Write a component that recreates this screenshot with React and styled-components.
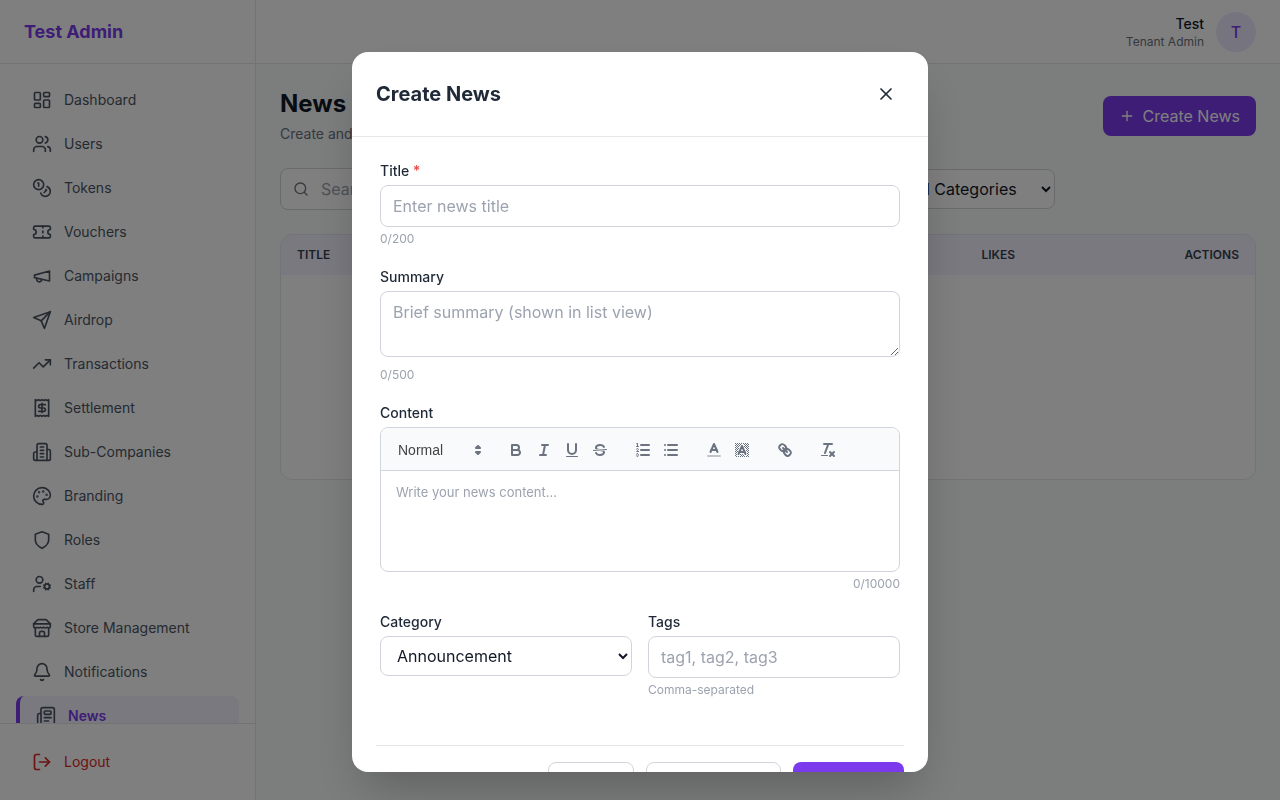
import React from 'react';
import styled, { createGlobalStyle } from 'styled-components';
import {
  LayoutDashboard, Users, Coins, Ticket, TrendingUp, Receipt,
  Palette, UserCog, Bell, Newspaper, LogOut, Plus, Search, X,
} from 'lucide-react';

const Global = createGlobalStyle`
  * { box-sizing: border-box; }
  html, body { margin: 0; height: 100%; overflow: hidden; }
  body { font-family: Inter, "Liberation Sans", sans-serif; background: #f9fafb; color: #111827; }
`;

const Shell = styled.div`
  display: flex;
  height: 100vh;
  overflow: hidden;
`;

const Sidebar = styled.aside`
  width: 256px;
  flex: none;
  display: flex;
  flex-direction: column;
  background: #fff;
  border-right: 1px solid #e5e7eb;
`;

const Brand = styled.div`
  height: 64px;
  flex: none;
  display: flex;
  align-items: center;
  padding: 0 24px;
  border-bottom: 1px solid #e5e7eb;
  font-size: 18px;
  font-weight: 700;
  color: #7c3aed;
`;

const Nav = styled.nav`
  flex: 1;
  min-height: 0;
  overflow: hidden;
  padding-top: 16px;
  display: flex;
  flex-direction: column;
  gap: 4px;
`;

const NavItem = styled.div`
  height: 40px;
  flex: none;
  margin: 0 16px;
  padding: 0 16px;
  display: flex;
  align-items: center;
  gap: 12px;
  font-size: 14px;
  line-height: 20px;
  font-weight: ${(p) => (p.$active ? 600 : 400)};
  color: ${(p) => (p.$active ? '#7c3aed' : '#4b5563')};
  background: ${(p) => (p.$active ? '#f5f3ff' : 'transparent')};
  border-left: ${(p) => (p.$active ? '4px solid #7c3aed' : 'none')};
  border-radius: 8px;
  svg { flex: none; color: #4b5563; }
`;

const SideFooter = styled.div`
  flex: none;
  padding: 16px 0;
  border-top: 1px solid #e5e7eb;
`;

const LogoutItem = styled(NavItem)`
  height: 44px;
  color: #dc2626;
  svg { color: #dc2626; }
`;

const LineIcon = styled.svg.attrs({ viewBox: '0 0 24 24' })`
  width: 20px;
  height: 20px;
  fill: none;
  stroke: currentColor;
  stroke-width: 2;
  stroke-linecap: round;
  stroke-linejoin: round;
`;

const Main = styled.div`
  flex: 1;
  min-width: 0;
  display: flex;
  flex-direction: column;
`;

const TopBar = styled.header`
  height: 64px;
  flex: none;
  display: flex;
  justify-content: flex-end;
  align-items: center;
  gap: 12px;
  padding: 0 24px;
  background: #fff;
  border-bottom: 1px solid #e5e7eb;
`;

const UserInfo = styled.div`
  text-align: right;
`;

const UserName = styled.div`
  font-size: 14px;
  line-height: 20px;
  font-weight: 500;
  color: #111827;
`;

const UserRole = styled.div`
  font-size: 12px;
  line-height: 16px;
  color: #6b7280;
`;

const Avatar = styled.div`
  width: 40px;
  height: 40px;
  border-radius: 50%;
  background: #ede9fe;
  color: #7c3aed;
  font-size: 16px;
  font-weight: 500;
  display: flex;
  align-items: center;
  justify-content: center;
`;

const Content = styled.main`
  padding: 24px;
`;

const PageHead = styled.div`
  display: flex;
  align-items: center;
  justify-content: space-between;
  margin-bottom: 24px;
`;

const PageTitle = styled.h1`
  margin: 0 0 4px;
  font-size: 24px;
  line-height: 32px;
  font-weight: 700;
  color: #111827;
`;

const PageSub = styled.p`
  margin: 0;
  font-size: 14px;
  line-height: 20px;
  color: #6b7280;
`;

const PrimaryButton = styled.button`
  height: 40px;
  padding: 0 16px;
  display: flex;
  align-items: center;
  gap: 8px;
  border: none;
  border-radius: 8px;
  background: #7c3aed;
  color: #fff;
  font: 400 16px Inter, sans-serif;
`;

const Filters = styled.div`
  display: flex;
  align-items: center;
  gap: 16px;
  margin-bottom: 24px;
`;

const SearchBox = styled.div`
  width: 598px;
  height: 42px;
  display: flex;
  align-items: center;
  gap: 12px;
  padding: 0 12px;
  background: #fff;
  border: 1px solid #d1d5db;
  border-radius: 8px;
  font-size: 16px;
  color: #9ca3af;
  svg { flex: none; color: #6b7280; }
`;

const FilterSelect = styled.select`
  width: 161px;
  height: 40px;
  padding: 0 12px;
  background: #fff;
  border: 1px solid #d1d5db;
  border-radius: 8px;
  font: 400 16px Inter, sans-serif;
  color: #111827;
`;

const TableCard = styled.div`
  height: 246px;
  background: #fff;
  border: 1px solid #e5e7eb;
  border-radius: 12px;
  overflow: hidden;
`;

const TableHead = styled.div`
  height: 40px;
  display: flex;
  align-items: center;
  padding: 0 16px 1px;
  background: #f5f3ff;
  font-size: 12px;
  line-height: 16px;
  font-weight: 600;
  text-transform: uppercase;
  color: #374151;
`;

const HeadCell = styled.div`
  flex: ${(p) => (p.$grow ? 1 : 'none')};
  width: ${(p) => p.$width || 'auto'};
  text-align: ${(p) => p.$align || 'left'};
`;

const Overlay = styled.div`
  position: fixed;
  inset: 0;
  padding-top: 52px;
  display: flex;
  align-items: flex-start;
  justify-content: center;
  background: rgba(0, 0, 0, 0.5);
  backdrop-filter: blur(0.5px);
`;

const Modal = styled.div`
  width: 576px;
  height: 720px;
  background: #fff;
  border-radius: 16px;
  overflow: hidden;
  box-shadow: 0 25px 50px -12px rgba(0, 0, 0, 0.25);
`;

const ModalHead = styled.div`
  height: 85px;
  padding: 0 24px;
  display: flex;
  align-items: center;
  justify-content: space-between;
  border-bottom: 1px solid #e5e7eb;
`;

const ModalTitle = styled.h2`
  margin: 0;
  font-size: 20px;
  line-height: 28px;
  font-weight: 700;
  color: #1f2937;
`;

const CloseButton = styled.button`
  width: 36px;
  height: 36px;
  display: flex;
  align-items: center;
  justify-content: center;
  padding: 0;
  border: none;
  background: none;
  color: #1f2937;
`;

const Form = styled.form`
  padding: 24px;
`;

const Fields = styled.div`
  padding: 0 4px;
  display: flex;
  flex-direction: column;
  gap: 20px;
`;

const Label = styled.label`
  display: block;
  margin-bottom: 4px;
  font-size: 14px;
  line-height: 20px;
  font-weight: 500;
  color: #1f2937;
`;

const Required = styled.span`
  color: #ef4444;
`;

const Input = styled.input`
  display: block;
  width: 100%;
  height: 42px;
  padding: 0 12px;
  background: #fff;
  border: 1px solid #d1d5db;
  border-radius: 8px;
  font: 400 16px Inter, sans-serif;
  color: #111827;
  &::placeholder { color: #9ca3af; opacity: 1; }
`;

const TextArea = styled.textarea`
  display: block;
  width: 100%;
  height: 66px;
  margin-bottom: 10px;
  padding: 10px 12px;
  background: #fff;
  border: 1px solid #d1d5db;
  border-radius: 8px;
  font: 400 16px/20px Inter, sans-serif;
  color: #111827;
  &::placeholder { color: #9ca3af; opacity: 1; }
`;

const Hint = styled.div`
  margin-top: 4px;
  font-size: 12px;
  line-height: 16px;
  color: #9ca3af;
  text-align: ${(p) => p.$align || 'left'};
`;

const Editor = styled.div`
  border: 1px solid #d1d5db;
  border-radius: 8px;
  overflow: hidden;
`;

const Toolbar = styled.div`
  height: 43px;
  padding: 2px 8px 0;
  display: flex;
  align-items: center;
  background: #f9fafb;
  border-bottom: 1px solid #d1d5db;
`;

const ToolGroup = styled.span`
  display: flex;
  margin-right: 15px;
`;

const ToolButton = styled.span`
  width: 28px;
  height: 24px;
  padding: 3px 5px;
  display: block;
  svg { display: block; width: 18px; height: 18px; fill: none; stroke: #6b7280; stroke-width: 2; stroke-linecap: round; stroke-linejoin: round; }
  .thin { stroke-width: 1; }
  .fill { fill: #6b7280; stroke: none; }
  .soft { opacity: 0.4; }
`;

const Picker = styled.span`
  width: 98px;
  height: 24px;
  padding-left: 9px;
  display: flex;
  align-items: center;
  justify-content: space-between;
  font-family: "Liberation Sans", Arial, sans-serif;
  font-size: 14px;
  font-weight: 500;
  color: #444;
  svg { width: 18px; height: 18px; fill: #6b7280; stroke: #6b7280; stroke-width: 2; stroke-linejoin: round; }
`;

const EditorBody = styled.div`
  height: 100px;
  padding: 12px 15px;
  font-size: 13px;
  line-height: 18.5px;
  color: #9ca3af;
`;

const TwoCols = styled.div`
  display: grid;
  grid-template-columns: 1fr 1fr;
  gap: 16px;
  align-items: start;
`;

const CategorySelect = styled.select`
  display: block;
  width: 100%;
  height: 40px;
  padding: 0 12px;
  background: #fff;
  border: 1px solid #d1d5db;
  border-radius: 8px;
  font: 400 16px Inter, sans-serif;
  color: #111827;
`;

const FormFooter = styled.div`
  margin-top: 47px;
  padding-top: 16px;
  display: flex;
  justify-content: flex-end;
  gap: 12px;
  border-top: 1px solid #e5e7eb;
`;

const FooterButton = styled.button`
  width: ${(p) => p.$width}px;
  height: 40px;
  padding: 0;
  background: ${(p) => (p.$primary ? '#7c3aed' : '#fff')};
  border: ${(p) => (p.$primary ? 'none' : '1px solid #d1d5db')};
  border-radius: 8px;
  color: ${(p) => (p.$primary ? '#fff' : '#374151')};
  font: 500 14px Inter, sans-serif;
`;

const MegaphoneIcon = () => (
  <LineIcon><path d="m3 11 18-5v12L3 14v-3z" /><path d="M11.6 16.8a3 3 0 1 1-5.8-1.6" /></LineIcon>
);
const SendIcon = () => (
  <LineIcon><path d="m22 2-7 20-4-9-9-4Z" /><path d="M22 2 11 13" /></LineIcon>
);
const BuildingIcon = () => (
  <LineIcon>
    <path d="M6 22V4a2 2 0 0 1 2-2h8a2 2 0 0 1 2 2v18Z" />
    <path d="M6 12H4a2 2 0 0 0-2 2v6a2 2 0 0 0 2 2h2" />
    <path d="M18 9h2a2 2 0 0 1 2 2v9a2 2 0 0 1-2 2h-2" />
    <path d="M10 6h4" /><path d="M10 10h4" /><path d="M10 14h4" /><path d="M10 18h4" />
  </LineIcon>
);
const ShieldIcon = () => (
  <LineIcon><path d="M12 22s8-4 8-10V5l-8-3-8 3v7c0 6 8 10 8 10z" /></LineIcon>
);
const StoreIcon = () => (
  <LineIcon>
    <path d="m2 7 4.41-4.41A2 2 0 0 1 7.83 2h8.34a2 2 0 0 1 1.42.59L22 7" />
    <path d="M4 12v8a2 2 0 0 0 2 2h12a2 2 0 0 0 2-2v-8" />
    <path d="M15 22v-4a2 2 0 0 0-2-2h-2a2 2 0 0 0-2 2v4" />
    <path d="M2 7h20" />
    <path d="M22 7v3a2 2 0 0 1-2 2a2.7 2.7 0 0 1-1.59-.63.7.7 0 0 0-.82 0A2.7 2.7 0 0 1 16 12a2.7 2.7 0 0 1-1.59-.63.7.7 0 0 0-.82 0A2.7 2.7 0 0 1 12 12a2.7 2.7 0 0 1-1.59-.63.7.7 0 0 0-.82 0A2.7 2.7 0 0 1 8 12a2.7 2.7 0 0 1-1.59-.63.7.7 0 0 0-.82 0A2.7 2.7 0 0 1 4 12a2 2 0 0 1-2-2V7" />
  </LineIcon>
);

const navItems = [
  ['Dashboard', LayoutDashboard], ['Users', Users], ['Tokens', Coins], ['Vouchers', Ticket],
  ['Campaigns', MegaphoneIcon], ['Airdrop', SendIcon], ['Transactions', TrendingUp], ['Settlement', Receipt],
  ['Sub-Companies', BuildingIcon], ['Branding', Palette], ['Roles', ShieldIcon], ['Staff', UserCog],
  ['Store Management', StoreIcon], ['Notifications', Bell], ['News', Newspaper],
];

const Tool = ({ children }) => (
  <ToolButton><svg viewBox="0 0 18 18">{children}</svg></ToolButton>
);

const BoldIcon = () => (
  <Tool>
    <path d="M5,4H9.5A2.5,2.5,0,0,1,12,6.5v0A2.5,2.5,0,0,1,9.5,9H5A0,0,0,0,1,5,9V4A0,0,0,0,1,5,4Z" />
    <path d="M5,9h5.5A2.5,2.5,0,0,1,13,11.5v0A2.5,2.5,0,0,1,10.5,14H5a0,0,0,0,1,0,0V9A0,0,0,0,1,5,9Z" />
  </Tool>
);
const ItalicIcon = () => (
  <Tool>
    <line x1="7" x2="13" y1="4" y2="4" /><line x1="5" x2="11" y1="14" y2="14" /><line x1="8" x2="10" y1="14" y2="4" />
  </Tool>
);
const UnderlineIcon = () => (
  <Tool>
    <path d="M5,3V9a4.012,4.012,0,0,0,4,4H9a4.012,4.012,0,0,0,4-4V3" />
    <rect className="fill" height="1" rx=".5" ry=".5" width="12" x="3" y="15" />
  </Tool>
);
const StrikeIcon = () => (
  <Tool>
    <line className="thin" x1="15.5" x2="2.5" y1="8.5" y2="9.5" />
    <path className="fill" d="M9.007,8C6.542,7.791,6,7.519,6,6.5,6,5.792,7.283,5,9,5c1.571,0,2.765.679,2.969,1.309a1,1,0,0,0,1.9-.617C13.356,4.106,11.354,3,9,3,6.2,3,4,4.538,4,6.5a3.2,3.2,0,0,0,.5,1.843Z" />
    <path className="fill" d="M8.984,10C11.457,10.208,12,10.479,12,11.5c0,.708-1.283,1.5-3,1.5-1.571,0-2.765-.679-2.969-1.309a1,1,0,1,0-1.9.617C4.644,13.894,6.646,15,9,15c2.8,0,5-1.538,5-3.5a3.2,3.2,0,0,0-.5-1.843Z" />
  </Tool>
);
const OrderedIcon = () => (
  <Tool>
    <line x1="7" x2="15" y1="4" y2="4" /><line x1="7" x2="15" y1="9" y2="9" /><line x1="7" x2="15" y1="14" y2="14" />
    <line className="thin" x1="2.5" x2="4.5" y1="5.5" y2="5.5" />
    <path className="fill" d="M3.5,6A0.5,0.5,0,0,1,3,5.5V3.085l-0.276.138A0.5,0.5,0,0,1,2.053,3c-0.124-.247-0.023-0.324.224-0.447l1-.5A0.5,0.5,0,0,1,4,2.5v3A0.5,0.5,0,0,1,3.5,6Z" />
    <path className="thin" d="M4.5,10.5h-2c0-.234,1.85-1.076,1.85-2.234A0.959,0.959,0,0,0,2.5,8.156" />
    <path className="thin" d="M2.5,14.846a0.959,0.959,0,0,0,1.85-.109A0.7,0.7,0,0,0,3.75,14a0.688,0.688,0,0,0,.6-0.736,0.959,0.959,0,0,0-1.85-.109" />
  </Tool>
);
const BulletIcon = () => (
  <Tool>
    <line x1="6" x2="15" y1="4" y2="4" /><line x1="6" x2="15" y1="9" y2="9" /><line x1="6" x2="15" y1="14" y2="14" />
    <line x1="3" x2="3" y1="4" y2="4" /><line x1="3" x2="3" y1="9" y2="9" /><line x1="3" x2="3" y1="14" y2="14" />
  </Tool>
);
const ColorIcon = () => (
  <Tool>
    <line className="soft" x1="3" x2="15" y1="15" y2="15" />
    <polyline points="5.5 11 9 3 12.5 11" />
    <line x1="11.63" x2="6.38" y1="9" y2="9" />
  </Tool>
);

// The highlight icon is a 1px checker that stops short of the letter strokes.
const letterSegments = [[5.5, 13, 9, 5], [9, 5, 12.5, 13], [6.38, 11, 11.63, 11]];
const distanceToSegment = (px, py, [x1, y1, x2, y2]) => {
  const dx = x2 - x1;
  const dy = y2 - y1;
  const t = Math.max(0, Math.min(1, ((px - x1) * dx + (py - y1) * dy) / (dx * dx + dy * dy)));
  return Math.hypot(px - x1 - t * dx, py - y1 - t * dy);
};
const checkerCells = [];
for (let y = 2; y < 16; y += 1) {
  for (let x = 2; x < 16; x += 1) {
    const clear = letterSegments.every((s) => distanceToSegment(x + 0.5, y + 0.5, s) > 1.9);
    if ((x + y) % 2 === 0 && clear) checkerCells.push([x, y]);
  }
}

const BackgroundIcon = () => (
  <Tool>
    {checkerCells.map(([x, y]) => (
      <rect key={`${x}-${y}`} className="fill" x={x} y={y} width="1" height="1" />
    ))}
    <polyline points="5.5 13 9 5 12.5 13" />
    <line x1="11.63" x2="6.38" y1="11" y2="11" />
  </Tool>
);
const LinkIcon = () => (
  <Tool>
    <line x1="7" x2="11" y1="7" y2="11" />
    <path d="M8.9,4.577a3.476,3.476,0,0,1,.36,4.679A3.476,3.476,0,0,1,4.577,8.9C3.185,7.5,2.035,6.4,4.217,4.217S7.5,3.185,8.9,4.577Z" />
    <path d="M13.423,9.1a3.476,3.476,0,0,0-4.679-.36,3.476,3.476,0,0,0,.36,4.679c1.392,1.392,2.5,2.542,4.679.36S14.815,10.5,13.423,9.1Z" />
  </Tool>
);
const CleanIcon = () => (
  <Tool>
    <line x1="5" x2="13" y1="3" y2="3" /><line x1="6" x2="9.35" y1="12" y2="3" />
    <line x1="11" x2="15" y1="11" y2="15" /><line x1="15" x2="11" y1="11" y2="15" />
    <rect className="fill" height="1" rx=".5" ry=".5" width="7" x="2" y="14" />
  </Tool>
);

export default function App() {
  return (
    <>
      <Global />
      <Shell>
        <Sidebar>
          <Brand>Test Admin</Brand>
          <Nav>
            {navItems.map(([label, Icon]) => (
              <NavItem key={label} $active={label === 'News'}>
                <Icon size={20} />
                {label}
              </NavItem>
            ))}
          </Nav>
          <SideFooter>
            <LogoutItem><LogOut size={20} />Logout</LogoutItem>
          </SideFooter>
        </Sidebar>
        <Main>
          <TopBar>
            <UserInfo>
              <UserName>Test</UserName>
              <UserRole>Tenant Admin</UserRole>
            </UserInfo>
            <Avatar>T</Avatar>
          </TopBar>
          <Content>
            <PageHead>
              <div>
                <PageTitle>News</PageTitle>
                <PageSub>Create and manage news articles</PageSub>
              </div>
              <PrimaryButton><Plus size={16} />Create News</PrimaryButton>
            </PageHead>
            <Filters>
              <SearchBox><Search size={16} />Search news...</SearchBox>
              <FilterSelect defaultValue="all"><option value="all">All Categories</option></FilterSelect>
            </Filters>
            <TableCard>
              <TableHead>
                <HeadCell $grow>Title</HeadCell>
                <HeadCell $width="203px">Likes</HeadCell>
                <HeadCell $align="right">Actions</HeadCell>
              </TableHead>
            </TableCard>
          </Content>
        </Main>
      </Shell>
      <Overlay>
        <Modal>
          <ModalHead>
            <ModalTitle>Create News</ModalTitle>
            <CloseButton type="button"><X size={20} /></CloseButton>
          </ModalHead>
          <Form>
            <Fields>
              <div>
                <Label>Title <Required>*</Required></Label>
                <Input placeholder="Enter news title" />
                <Hint>0/200</Hint>
              </div>
              <div>
                <Label>Summary</Label>
                <TextArea placeholder="Brief summary (shown in list view)" />
                <Hint>0/500</Hint>
              </div>
              <div>
                <Label>Content</Label>
                <Editor>
                  <Toolbar>
                    <ToolGroup>
                      <Picker>
                        Normal
                        <svg viewBox="0 0 18 18"><polygon points="7 11 9 13 11 11 7 11" /><polygon points="7 7 9 5 11 7 7 7" /></svg>
                      </Picker>
                    </ToolGroup>
                    <ToolGroup><BoldIcon /><ItalicIcon /><UnderlineIcon /><StrikeIcon /></ToolGroup>
                    <ToolGroup><OrderedIcon /><BulletIcon /></ToolGroup>
                    <ToolGroup><ColorIcon /><BackgroundIcon /></ToolGroup>
                    <ToolGroup><LinkIcon /></ToolGroup>
                    <ToolGroup><CleanIcon /></ToolGroup>
                  </Toolbar>
                  <EditorBody>Write your news content...</EditorBody>
                </Editor>
                <Hint $align="right">0/10000</Hint>
              </div>
              <TwoCols>
                <div>
                  <Label>Category</Label>
                  <CategorySelect defaultValue="announcement"><option value="announcement">Announcement</option></CategorySelect>
                </div>
                <div>
                  <Label>Tags</Label>
                  <Input placeholder="tag1, tag2, tag3" />
                  <Hint>Comma-separated</Hint>
                </div>
              </TwoCols>
            </Fields>
            <FormFooter>
              <FooterButton type="button" $width={86}>Cancel</FooterButton>
              <FooterButton type="button" $width={135}>Save as Draft</FooterButton>
              <FooterButton type="button" $width={111} $primary>Publish</FooterButton>
            </FormFooter>
          </Form>
        </Modal>
      </Overlay>
    </>
  );
}
